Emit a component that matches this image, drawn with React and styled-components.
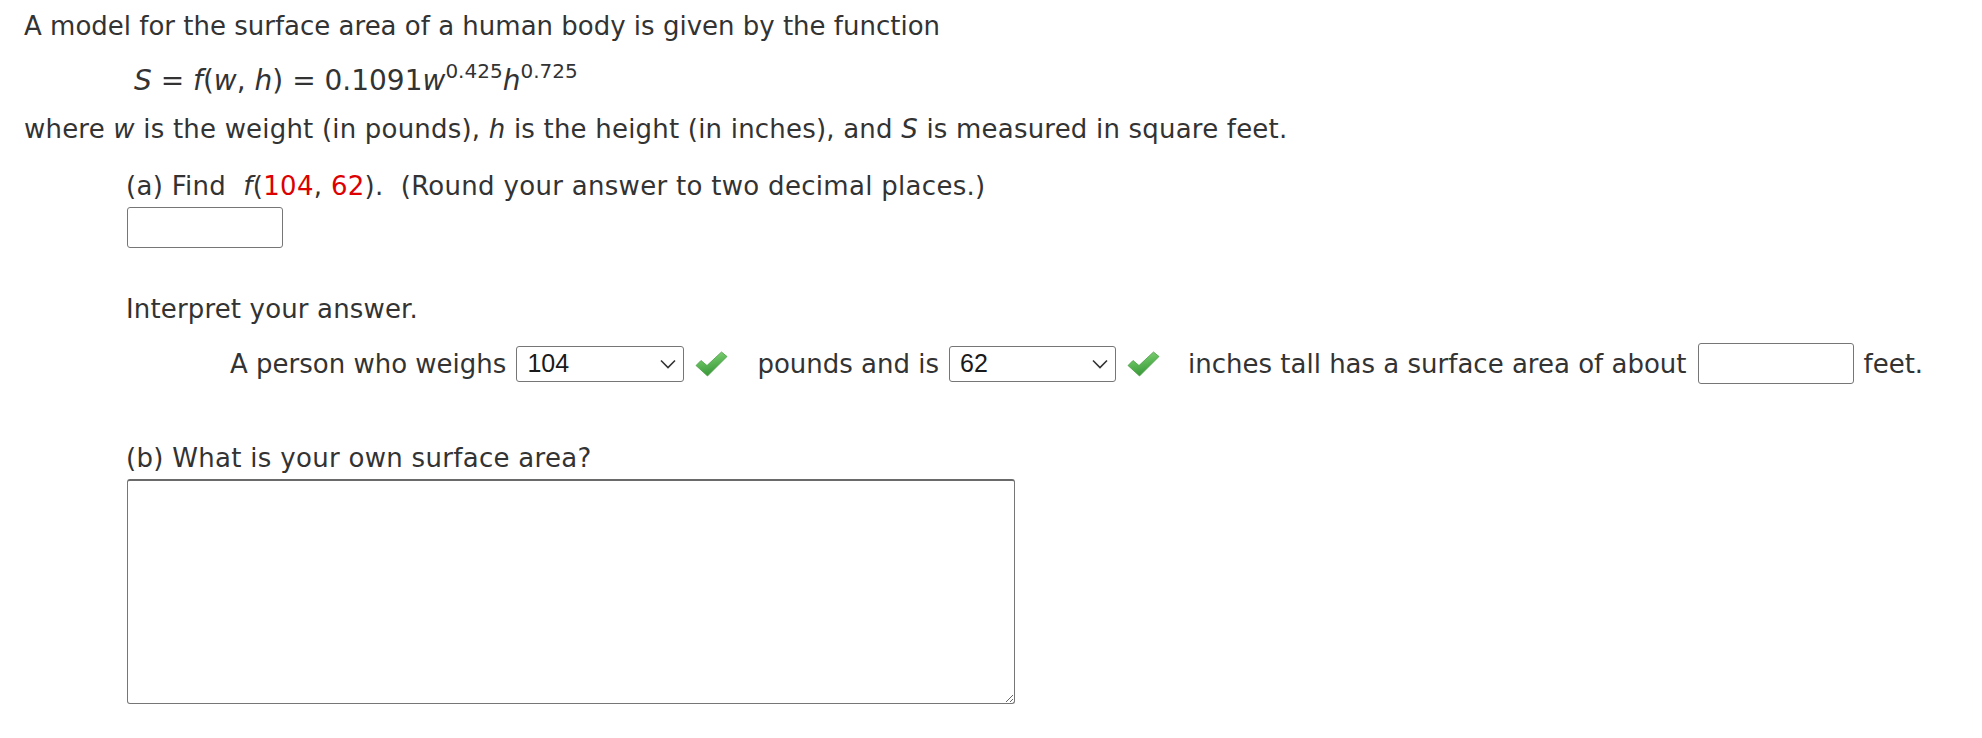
import React from 'react';
import styled, { createGlobalStyle } from "styled-components";

const GlobalStyle = createGlobalStyle`
  body {
    margin: 0;
    background: #fff;
    color: #333;
    font-family: "DejaVu Sans", Verdana, sans-serif;
    font-size: 26px;
  }
`
const Page = styled.div`
  padding: 8px 0 30px 24px;
`
const Line = styled.p`
  margin: ${p => p.$top || 0}px 0 0 ${p => p.$indent || 0}px;
  line-height: 36px;
  letter-spacing: ${p => p.$ls || 0}px;
  white-space: pre;
`
const Formula = styled(Line)`
  font-size: 28px;
`
const Var = styled.i`
  font-style: oblique;
`
const Sup = styled.sup`
  font-size: 20px;
  line-height: 0;
  vertical-align: 12px;
`
const Given = styled.span`
  color: #dc0000;
`
const TextInput = styled.input`
  display: block;
  box-sizing: border-box;
  width: 156px;
  height: 41px;
  margin: ${p => p.$top || 0}px 0 0 ${p => p.$indent || 0}px;
  border: 1px solid #767676;
  border-radius: 3px;
  background: #fff;
  font: 22px "Liberation Sans", Arial, sans-serif;
  padding: 0 8px;
`
const Sentence = styled.div`
  display: flex;
  align-items: center;
  margin: 16px 0 0 206px;
  white-space: pre;
  line-height: 36px;
`
const Words = styled.span`
  margin-left: ${p => p.$gap || 0}px;
`
const SelectBox = styled.div`
  box-sizing: border-box;
  display: flex;
  align-items: center;
  justify-content: space-between;
  width: ${p => p.$width}px;
  height: 36px;
  margin-left: 10px;
  padding: 0 7px 0 10px;
  border: 1px solid #767676;
  border-radius: 3px;
  font: 25px "Liberation Sans", Arial, sans-serif;
  color: #1a1a1a;
`
const CheckWrap = styled.span`
  display: flex;
  margin-left: 11px;
`
const AnswerBox = styled(TextInput)`
  display: inline-block;
  margin: 0 10px 0 11px;
`
const Essay = styled.textarea`
  display: block;
  box-sizing: border-box;
  width: 888px;
  height: 225px;
  margin: 3px 0 0 103px;
  border: 1px solid #767676;
  border-top: 2px solid #6a6a6a;
  border-radius: 3px;
  resize: both;
`

const Chevron = () => (
  <svg width="16" height="10" viewBox="0 0 16 10">
    <path d="M1 1.5 L8 8.5 L15 1.5" fill="none" stroke="#333" strokeWidth="1.6" />
  </svg>
)

const Check = ({ id }) => (
  <svg width="33" height="26" viewBox="0 0 33 26">
    <defs>
      <linearGradient id={id} x1="0" y1="0" x2="0.3" y2="1">
        <stop offset="0" stopColor="#94dc88" />
        <stop offset="0.5" stopColor="#5fba58" />
        <stop offset="1" stopColor="#3a983a" />
      </linearGradient>
    </defs>
    <path d="M1 14.5 L6 9.5 L12 14.5 L26.5 1 L32 5.5 L12.5 25 Z"
      fill={`url(#${id})`} stroke="#4a9c45" strokeWidth="0.8" strokeLinejoin="round" />
  </svg>
)

const Select = ({ value, width }) => (
  <SelectBox $width={width}>
    <span>{value}</span>
    <Chevron />
  </SelectBox>
)

export default function App() {
  return (
    <Page>
      <GlobalStyle />
      <Line>A model for the surface area of a human body is given by the function</Line>
      <Formula $top={19} $indent={110}>
        <Var>S</Var> = <Var>f</Var>(<Var>w</Var>, <Var>h</Var>) = 0.1091<Var>w</Var><Sup>0.425</Sup><Var>h</Var><Sup>0.725</Sup>
      </Formula>
      <Line $top={12} $ls={0.2}>
        where <Var>w</Var> is the weight (in pounds), <Var>h</Var> is the height (in inches), and <Var>S</Var> is measured in square feet.
      </Line>
      <Line $top={21} $indent={102} $ls={0.3}>
        (a) Find  <Var>f</Var>(<Given>104</Given>, <Given>62</Given>).  (Round your answer to two decimal places.)
      </Line>
      <TextInput type="text" $top={3} $indent={103} />
      <Line $top={43} $indent={102} $ls={0.15}>Interpret your answer.</Line>
      <Sentence>
        <Words>A person who weighs</Words>
        <Select value="104" width={168} />
        <CheckWrap><Check id="chk1" /></CheckWrap>
        <Words $gap={29}>pounds and is</Words>
        <Select value="62" width={167} />
        <CheckWrap><Check id="chk2" /></CheckWrap>
        <Words $gap={28}>inches tall has a surface area of about</Words>
        <AnswerBox type="text" />
        <Words>feet.</Words>
      </Sentence>
      <Line $top={56} $indent={102} $ls={0.3}>(b) What is your own surface area?</Line>
      <Essay />
    </Page>
  )
}
